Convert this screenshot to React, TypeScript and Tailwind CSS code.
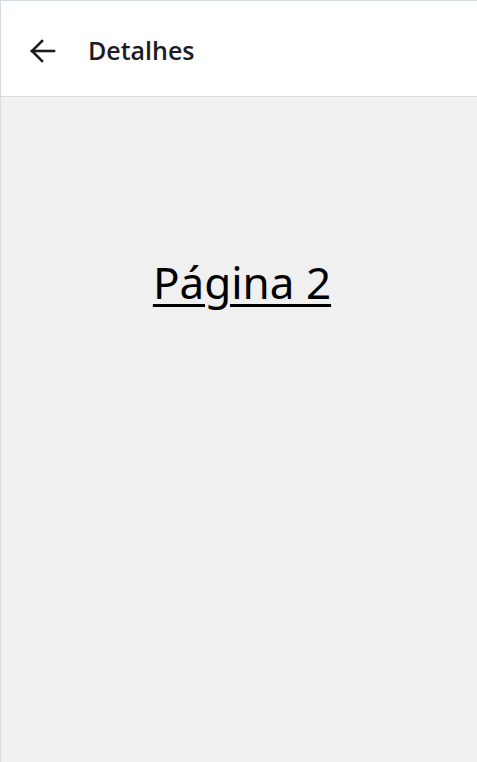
const BackArrow = () => (
  <svg width="28" height="24" viewBox="0 0 28 24" fill="none" stroke="currentColor" strokeWidth="2.6" strokeLinecap="square">
    <path d="M4 12H26" />
    <path d="M14 2L4 12L14 22" strokeLinejoin="miter" />
  </svg>
);

const Header = ({ title }: { title: string }) => {
  return (
    <div className="h-[96px] pt-[4px] flex items-center bg-white border-b border-[#dadada]">
      <button className="ml-[26px] w-[30px] h-[30px] flex items-center justify-center text-[#1c1b1f]">
        <BackArrow />
      </button>
      <h1 className="ml-[31px] text-[25px] font-semibold text-[#1c1b1f] font-['Open_Sans',sans-serif]">
        {title}
      </h1>
    </div>
  );
};

export default function App() {
  return (
    <div className="w-[477px] h-[762px] flex flex-col border-t border-l border-[#d6dbe3] bg-[#f0f0f0] font-['Open_Sans',sans-serif]">
      <Header title="Detalhes" />
      <div className="flex-1 flex justify-center pt-[157px] pl-[6px]">
        <a
          href="#"
          className="text-[44px] leading-[56px] text-black underline decoration-[3px] underline-offset-[5px] font-['Noto_Sans',sans-serif]"
        >
          Página 2
        </a>
      </div>
    </div>
  );
}
